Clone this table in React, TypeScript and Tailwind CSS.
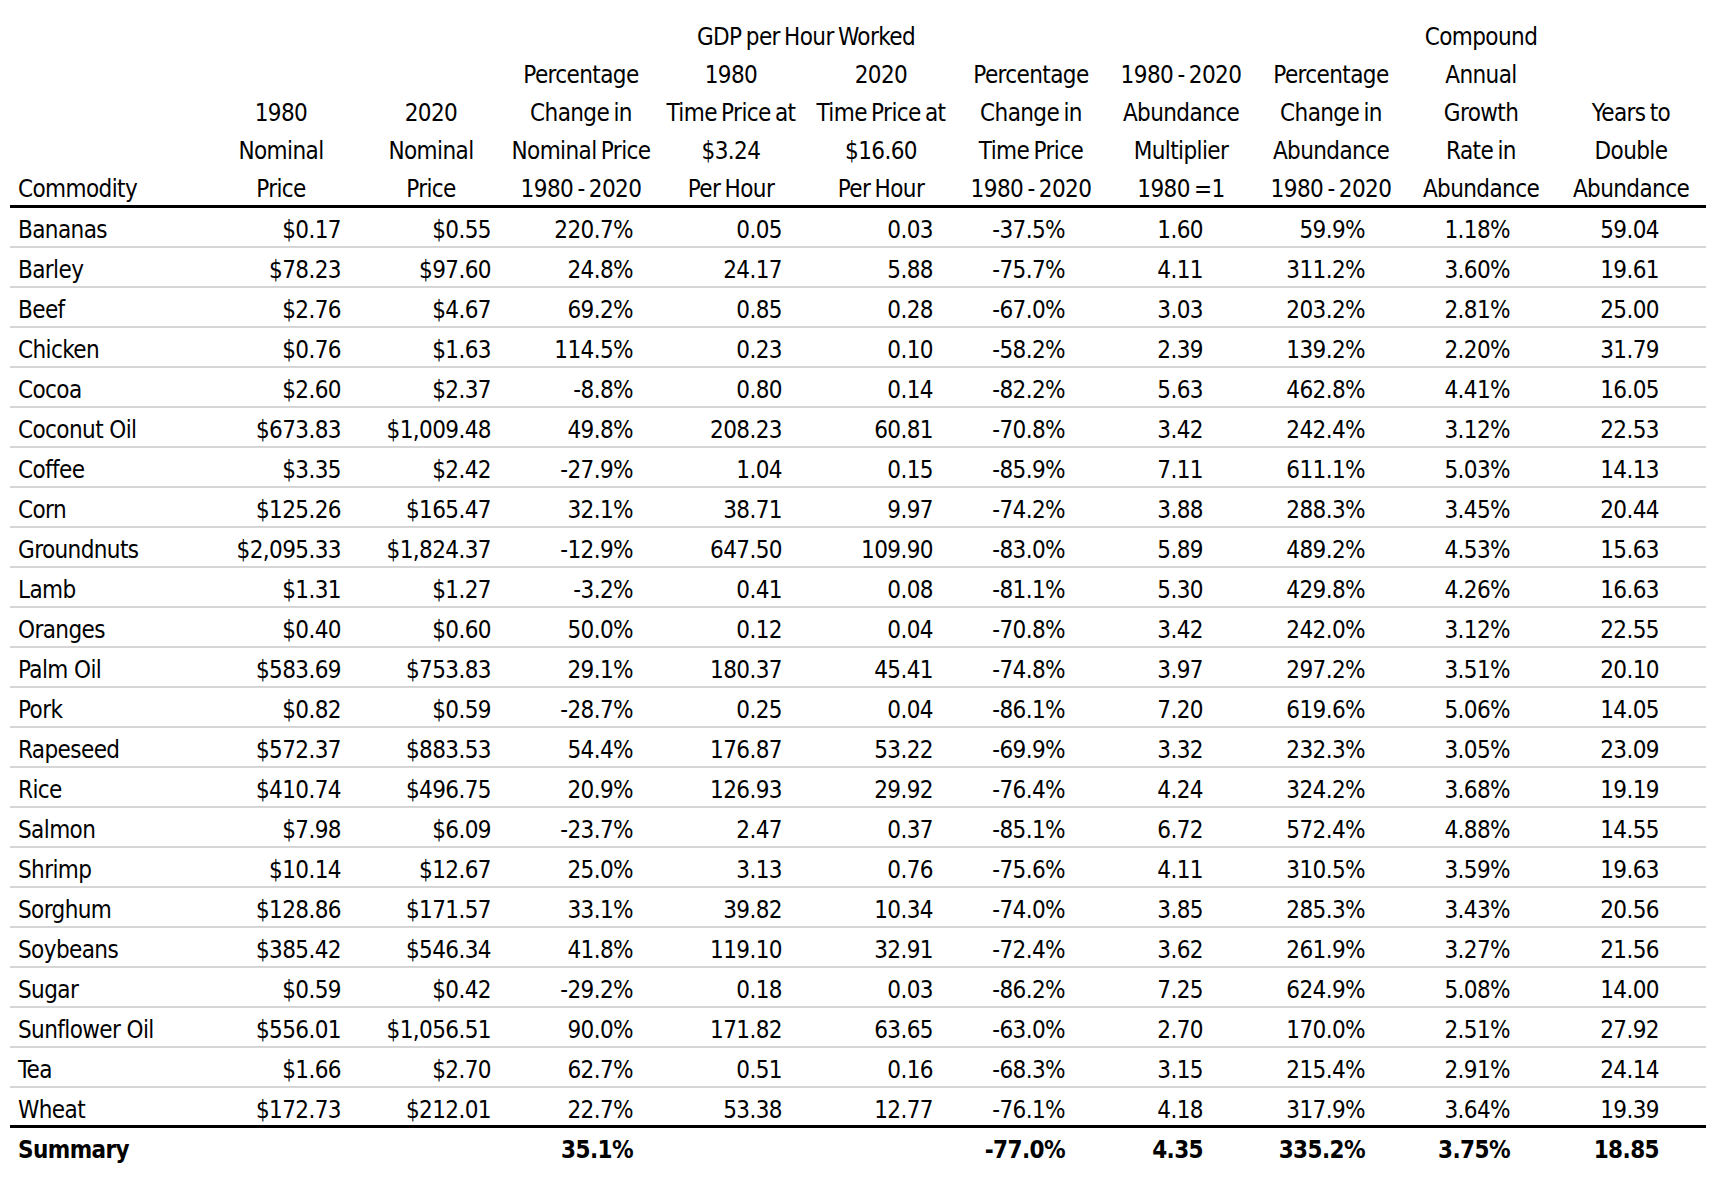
import React from 'react';

type Row = [string, string, string, string, string, string, string, string, string, string, string];

const rows: Row[] = [
  ['Bananas', '$0.17', '$0.55', '220.7%', '0.05', '0.03', '-37.5%', '1.60', '59.9%', '1.18%', '59.04'],
  ['Barley', '$78.23', '$97.60', '24.8%', '24.17', '5.88', '-75.7%', '4.11', '311.2%', '3.60%', '19.61'],
  ['Beef', '$2.76', '$4.67', '69.2%', '0.85', '0.28', '-67.0%', '3.03', '203.2%', '2.81%', '25.00'],
  ['Chicken', '$0.76', '$1.63', '114.5%', '0.23', '0.10', '-58.2%', '2.39', '139.2%', '2.20%', '31.79'],
  ['Cocoa', '$2.60', '$2.37', '-8.8%', '0.80', '0.14', '-82.2%', '5.63', '462.8%', '4.41%', '16.05'],
  ['Coconut Oil', '$673.83', '$1,009.48', '49.8%', '208.23', '60.81', '-70.8%', '3.42', '242.4%', '3.12%', '22.53'],
  ['Coffee', '$3.35', '$2.42', '-27.9%', '1.04', '0.15', '-85.9%', '7.11', '611.1%', '5.03%', '14.13'],
  ['Corn', '$125.26', '$165.47', '32.1%', '38.71', '9.97', '-74.2%', '3.88', '288.3%', '3.45%', '20.44'],
  ['Groundnuts', '$2,095.33', '$1,824.37', '-12.9%', '647.50', '109.90', '-83.0%', '5.89', '489.2%', '4.53%', '15.63'],
  ['Lamb', '$1.31', '$1.27', '-3.2%', '0.41', '0.08', '-81.1%', '5.30', '429.8%', '4.26%', '16.63'],
  ['Oranges', '$0.40', '$0.60', '50.0%', '0.12', '0.04', '-70.8%', '3.42', '242.0%', '3.12%', '22.55'],
  ['Palm Oil', '$583.69', '$753.83', '29.1%', '180.37', '45.41', '-74.8%', '3.97', '297.2%', '3.51%', '20.10'],
  ['Pork', '$0.82', '$0.59', '-28.7%', '0.25', '0.04', '-86.1%', '7.20', '619.6%', '5.06%', '14.05'],
  ['Rapeseed', '$572.37', '$883.53', '54.4%', '176.87', '53.22', '-69.9%', '3.32', '232.3%', '3.05%', '23.09'],
  ['Rice', '$410.74', '$496.75', '20.9%', '126.93', '29.92', '-76.4%', '4.24', '324.2%', '3.68%', '19.19'],
  ['Salmon', '$7.98', '$6.09', '-23.7%', '2.47', '0.37', '-85.1%', '6.72', '572.4%', '4.88%', '14.55'],
  ['Shrimp', '$10.14', '$12.67', '25.0%', '3.13', '0.76', '-75.6%', '4.11', '310.5%', '3.59%', '19.63'],
  ['Sorghum', '$128.86', '$171.57', '33.1%', '39.82', '10.34', '-74.0%', '3.85', '285.3%', '3.43%', '20.56'],
  ['Soybeans', '$385.42', '$546.34', '41.8%', '119.10', '32.91', '-72.4%', '3.62', '261.9%', '3.27%', '21.56'],
  ['Sugar', '$0.59', '$0.42', '-29.2%', '0.18', '0.03', '-86.2%', '7.25', '624.9%', '5.08%', '14.00'],
  ['Sunflower Oil', '$556.01', '$1,056.51', '90.0%', '171.82', '63.65', '-63.0%', '2.70', '170.0%', '2.51%', '27.92'],
  ['Tea', '$1.66', '$2.70', '62.7%', '0.51', '0.16', '-68.3%', '3.15', '215.4%', '2.91%', '24.14'],
  ['Wheat', '$172.73', '$212.01', '22.7%', '53.38', '12.77', '-76.1%', '4.18', '317.9%', '3.64%', '19.39'],
];

const summary: Row = ['Summary', '', '', '35.1%', '', '', '-77.0%', '4.35', '335.2%', '3.75%', '18.85'];

// right padding of each numeric column, so figures line up like the spreadsheet
const pads = [
  'pr-[15px]', 'pr-[15px]', 'pr-[23px]', 'pr-[24px]', 'pr-[23px]',
  'pr-[41px]', 'pr-[53px]', 'pr-[41px]', 'pr-[46px]', 'pr-[47px]',
];

const grid = 'grid grid-cols-[196px_repeat(10,150px)]';

const Head: React.FC<{ lines: string[] }> = ({ lines }) => (
  <div className="flex flex-col justify-end items-center text-center -mb-[3px]">
    {lines.map((l, i) => (
      <div key={i} className="leading-[38px] whitespace-nowrap [word-spacing:-2px]">{l}</div>
    ))}
  </div>
);

const DataRow: React.FC<{ row: Row; last?: boolean; bold?: boolean }> = ({ row, last, bold }) => (
  <div
    className={`${grid} h-[40px] pt-[4px] items-center ${
      last ? 'border-b-[3px] border-black' : bold ? '' : 'border-b-2 border-[#d6d6d6]'
    } ${bold ? 'font-bold' : ''}`}
  >
    <div className="pl-2 whitespace-nowrap">{row[0]}</div>
    {row.slice(1).map((v, i) => (
      <div key={i} className={`text-right whitespace-nowrap ${pads[i]}`}>{v}</div>
    ))}
  </div>
);

export default function App() {
  return (
    <div
      className="w-[1726px] h-[1186px] bg-white text-black text-[24px] tracking-[-0.6px] overflow-hidden"
      style={{ fontFamily: '"Liberation Sans Narrow", "DejaVu Sans Condensed", "Roboto Condensed", Roboto, sans-serif' }}
    >
      <div className="ml-[10px] w-[1696px]">
        {/* Header */}
        <div className={`${grid} h-[208px] border-b-[3px] border-black items-end`}>
          <div className="pl-2 leading-[38px] -mb-[3px]">Commodity</div>
          <Head lines={['1980', 'Nominal', 'Price']} />
          <Head lines={['2020', 'Nominal', 'Price']} />
          <Head lines={['Percentage', 'Change in', 'Nominal Price', '1980 - 2020']} />
          <div className="col-span-2 flex flex-col">
            <div className="leading-[38px] text-center [word-spacing:-2px]">GDP per Hour Worked</div>
            <div className="grid grid-cols-2">
              <Head lines={['1980', 'Time Price at', '$3.24', 'Per Hour']} />
              <Head lines={['2020', 'Time Price at', '$16.60', 'Per Hour']} />
            </div>
          </div>
          <Head lines={['Percentage', 'Change in', 'Time Price', '1980 - 2020']} />
          <Head lines={['1980 - 2020', 'Abundance', 'Multiplier', '1980 =1']} />
          <Head lines={['Percentage', 'Change in', 'Abundance', '1980 - 2020']} />
          <Head lines={['Compound', 'Annual', 'Growth', 'Rate in', 'Abundance']} />
          <Head lines={['Years to', 'Double', 'Abundance']} />
        </div>

        {rows.map((r, i) => (
          <DataRow key={r[0]} row={r} last={i === rows.length - 1} />
        ))}
        <DataRow row={summary} bold />
      </div>
    </div>
  );
}
